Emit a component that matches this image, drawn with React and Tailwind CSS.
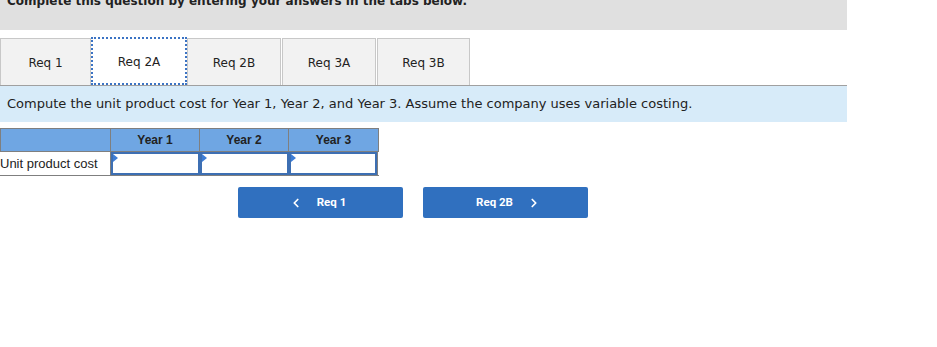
import { ChevronLeft, ChevronRight } from "lucide-react";

const tabs = [
  { label: "Req 1", w: "w-[91px]", ml: "" },
  { label: "Req 2A", w: "w-[96px]", ml: "" },
  { label: "Req 2B", w: "w-[94px]", ml: "" },
  { label: "Req 3A", w: "w-[94px]", ml: "ml-[1px]" },
  { label: "Req 3B", w: "w-[93px]", ml: "ml-[1px]" },
];
const years = ["Year 1", "Year 2", "Year 3"];

export default function App() {
  const active = "Req 2A";

  return (
    <div className="w-[937px] h-[347px] bg-white overflow-hidden font-['DejaVu_Sans',Verdana,sans-serif]">
      {/* 상단 안내 */}
      <div className="w-[847px] h-[30px] bg-[#e0e0e0] overflow-hidden">
        <p className="-mt-[8px] pl-[7px] text-[12px] font-bold text-[#222]">
          Complete this question by entering your answers in the tabs below.
        </p>
      </div>

      {/* 탭 */}
      <div className="w-[847px] mt-[7px] flex border-b border-[#a0a0a0]">
        {tabs.map((t) => (
          <div
            key={t.label}
            className={`${t.w} ${t.ml} flex items-center justify-center pt-[2px] text-[12px] text-[#222] ${
              t.label === active
                ? "h-[48px] bg-white border-2 border-dotted border-[#3b73c4] -mb-px"
                : "h-[47px] bg-[#f2f2f2] border border-b-0 border-[#c8c8c8] mt-px"
            }`}
          >
            {t.label}
          </div>
        ))}
      </div>

      {/* 설명 */}
      <div className="w-[847px] h-[36px] bg-[#d7ebf9] flex items-center pl-[7px] text-[13px] text-[#222]">
        Compute the unit product cost for Year 1, Year 2, and Year 3. Assume the company uses variable costing.
      </div>

      {/* 표 */}
      <div className="mt-[6px] font-['Liberation_Sans',Arial,sans-serif] text-[12px]">
        <div className="flex w-[379px] h-[24px] bg-[#6fa6e3] border border-[#7f7f7f]">
          <div className="w-[110px] border-r border-[#7f7f7f]" />
          {years.map((y, i) => (
            <div
              key={y}
              className={`w-[89px] flex items-center justify-center font-bold text-[#222] ${
                i < 2 ? "border-r border-[#7f7f7f]" : ""
              }`}
            >
              {y}
            </div>
          ))}
        </div>
        <div className="flex w-[379px] h-[24px] border-b border-[#7f7f7f]">
          <div className="w-[111px] flex items-center border-r border-[#7f7f7f] text-[13px] text-[#222]">
            Unit product cost
          </div>
          {years.map((y, i) => (
            <div key={y} className={`w-[89px] ${i === 2 ? "border-r border-[#7f7f7f]" : ""}`}>
              <div className="relative h-full border-2 border-[#3d6fb3] bg-white">
                <span className="absolute left-0 top-0 w-0 h-0 border-t-[4px] border-b-[4px] border-l-[5px] border-t-transparent border-b-transparent border-l-[#3d7dd6]" />
              </div>
            </div>
          ))}
        </div>
      </div>

      {/* 이동 버튼 */}
      <div className="mt-[11px] flex gap-[20px] pl-[238px] font-['Roboto',sans-serif]">
        <button className="w-[165px] h-[31px] bg-[#3070bf] rounded-[2px] flex items-center justify-center gap-[14px] text-white text-[11.5px] font-bold">
          <ChevronLeft size={14} strokeWidth={3} />
          <span className="mr-[6px]">Req 1</span>
        </button>
        <button className="w-[165px] h-[31px] bg-[#3070bf] rounded-[2px] flex items-center justify-center gap-[14px] text-white text-[11.5px] font-bold">
          <span className="ml-[6px]">Req 2B</span>
          <ChevronRight size={14} strokeWidth={3} />
        </button>
      </div>
    </div>
  );
}
